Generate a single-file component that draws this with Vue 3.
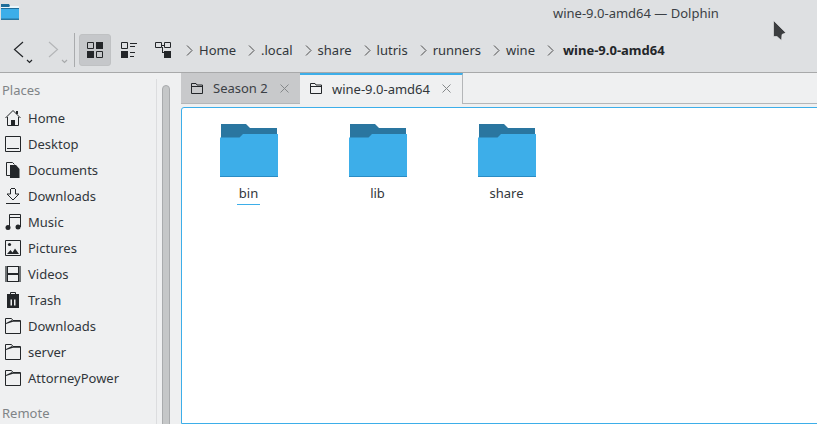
<script setup>
const crumbs = ['Home', '.local', 'share', 'lutris', 'runners', 'wine']
const places = [
  { name: 'Home', icon: 'home' },
  { name: 'Desktop', icon: 'desktop' },
  { name: 'Documents', icon: 'documents' },
  { name: 'Downloads', icon: 'downloads' },
  { name: 'Music', icon: 'music' },
  { name: 'Pictures', icon: 'pictures' },
  { name: 'Videos', icon: 'videos' },
  { name: 'Trash', icon: 'trash' },
  { name: 'Downloads', icon: 'folder' },
  { name: 'server', icon: 'folder' },
  { name: 'AttorneyPower', icon: 'folder' }
]
const files = [
  { name: 'bin', current: true },
  { name: 'lib', current: false },
  { name: 'share', current: false }
]
const tabs = [
  { name: 'Season 2', active: false },
  { name: 'wine-9.0-amd64', active: true }
]
</script>

<template>
  <div class="window">
    <header class="titlebar">
      <svg class="app-icon" width="20" height="20" viewBox="0 0 20 20">
        <path d="M1 2h8l1 2h9v14H1z" fill="#1d6d99" />
        <path d="M1 5h8l1-1h9v2H1z" fill="#eaf6fc" />
        <path d="M1 7h18v10H1z" fill="#3daee9" />
        <path d="M1 16.500h18V18H1z" fill="#2a76a0" />
      </svg>
      <span class="title">wine-9.0-amd64 — Dolphin</span>
      <svg class="cursor" width="14" height="22" viewBox="0 0 14 22">
        <path d="M.5.500L12.800 12.800 9 14.500 8.500 20.500 4 16.500H.5z" fill="#3c3e40" stroke="#eff0f1" stroke-width=".6" />
      </svg>
    </header>

    <div class="toolbar">
      <div class="nav nav-back">
        <svg width="12" height="18" viewBox="0 0 12 18"><path d="M10 1L1.500 8.500 10 16" fill="none" stroke="#232629" stroke-width="1.200" /></svg>
        <svg class="chev" width="7" height="5" viewBox="0 0 7 5"><path d="M1 1l2.500 2.500L6 1" fill="none" stroke="#232629" stroke-width="1.200" /></svg>
      </div>
      <div class="nav nav-forward">
        <svg width="12" height="18" viewBox="0 0 12 18"><path d="M1 1l8.500 7.500L1 16" fill="none" stroke="#b4b6b8" stroke-width="1.200" /></svg>
        <svg class="chev" width="7" height="5" viewBox="0 0 7 5"><path d="M1 1l2.500 2.500L6 1" fill="none" stroke="#a8aaac" stroke-width="1.200" /></svg>
      </div>
      <span class="sep"></span>
      <button class="tool tool-on">
        <svg width="16" height="16" viewBox="0 0 16 16" fill="#232629">
          <path d="M.5.500h6v6h-6z" fill="none" stroke="#232629" />
          <rect x="9" width="7" height="7" />
          <rect y="9" width="7" height="7" />
          <path d="M9.500 9.500h6v6h-6z" fill="none" stroke="#232629" />
        </svg>
      </button>
      <button class="tool">
        <svg width="16" height="16" viewBox="0 0 16 16" fill="#232629">
          <path d="M.5.500h6v6h-6z" fill="none" stroke="#232629" />
          <path d="M9 1h7v1H9zM9 4h5v1H9z" />
          <rect y="9" width="7" height="7" />
          <path d="M9 10h5v1H9zM9 14h4v1H9z" />
        </svg>
      </button>
      <button class="tool">
        <svg width="16" height="16" viewBox="0 0 16 16" fill="#232629">
          <path d="M.5.500h6v5h-6zM9.500.500h6v5h-6z" fill="none" stroke="#232629" />
          <path d="M6 3h4v1H6zM7 5h1v6H7zM7 10h3v1H7z" />
          <rect x="9" y="9" width="7" height="7" />
        </svg>
      </button>
      <nav class="crumbs">
        <template v-for="c in crumbs" :key="c">
          <svg class="arrow" width="7" height="11" viewBox="0 0 7 11"><path d="M1 .5l5 5-5 5" fill="none" stroke="#4d4d4d" stroke-width="1" /></svg>
          <span class="crumb">{{ c }}</span>
        </template>
        <svg class="arrow" width="7" height="11" viewBox="0 0 7 11"><path d="M1 .5l5 5-5 5" fill="none" stroke="#4d4d4d" stroke-width="1" /></svg>
        <strong class="crumb">wine-9.0-amd64</strong>
      </nav>
    </div>

    <div class="body">
      <aside class="sidebar">
        <div class="places">
          <div class="section">Places</div>
          <div v-for="p in places" :key="p.name + p.icon" class="place">
            <svg width="16" height="16" viewBox="0 0 16 16" fill="#232629" class="picon">
              <g v-if="p.icon === 'home'">
                <path d="M.5 8L8 .5 15.500 8" fill="none" stroke="#232629" />
                <path d="M2.500 7v8.500h11V7" fill="none" stroke="#232629" />
                <rect x="6" y="10" width="4" height="5.500" />
                <rect x="11" y="1" width="2" height="3" />
              </g>
              <g v-else-if="p.icon === 'desktop'">
                <path d="M.5.500h15v15H.5z" fill="none" stroke="#232629" />
                <rect x="2" y="12" width="12" height="1" />
              </g>
              <g v-else-if="p.icon === 'documents'">
                <path d="M5.500 13.500h-4V.5h6l2 2" fill="none" stroke="#232629" />
                <path d="M5 3h6l3.500 4v9H5z" />
              </g>
              <g v-else-if="p.icon === 'downloads'">
                <path d="M6 .5h4M5.500 1v5M10.500 1v5M5.500 6H2l6 6 6-6h-3.500" fill="none" stroke="#232629" />
                <rect x="1" y="15" width="14" height="1" />
              </g>
              <g v-else-if="p.icon === 'music'">
                <path d="M4.500 13V.5h11V13M4.500 3.500h11" fill="none" stroke="#232629" />
                <circle cx="3" cy="13.500" r="2.500" />
                <circle cx="13" cy="13" r="2.500" />
              </g>
              <g v-else-if="p.icon === 'pictures'">
                <path d="M.5.500h15v15H.5z" fill="none" stroke="#232629" />
                <circle cx="4.500" cy="4.500" r="1.600" />
                <path d="M2 14l3.500-4 2 2.500L10 8.500 14 14z" />
              </g>
              <g v-else-if="p.icon === 'videos'">
                <rect width="16" height="16" fill="#6d7173" />
                <rect x="3" y="1" width="10" height="14" fill="#eff0f1" />
                <rect x="2" width="1" height="16" />
                <rect x="13" width="1" height="16" />
                <rect x="2" width="12" height="1" />
                <rect x="2" y="7" width="12" height="2" />
                <rect x="2" y="15" width="12" height="1" />
              </g>
              <g v-else-if="p.icon === 'trash'">
                <path d="M5.500 2.500v-2h5v2" fill="none" stroke="#232629" />
                <rect x="2" y="2" width="12" height="2" />
                <path d="M2 4h12v12H2zM5.500 7.500v6h1.500v-6zM9 7.500v6h1.500v-6z" fill-rule="evenodd" />
              </g>
              <g v-else>
                <path d="M.5 15.500V.5h6l1.500 2h7.500v13z" fill="none" stroke="#232629" />
                <path d="M1 5l6-3 1 1h7v.8H8L1 6z" />
              </g>
            </svg>
            <span>{{ p.name }}</span>
          </div>
          <div class="section section-remote">Remote</div>
        </div>
        <div class="scrolltrack"><div class="thumb"></div></div>
      </aside>

      <main class="content">
        <div class="tabs">
          <div v-for="t in tabs" :key="t.name" class="tab" :class="t.active ? 'tab-on' : 'tab-off'">
            <svg class="tab-folder" width="12" height="11" viewBox="0 0 12 11" fill="#232629">
              <path d="M.5 10.500V.5h4.500l1 1.500h5.500v8.500z" fill="none" stroke="#232629" />
              <rect x="1" y="3" width="10" height="1" />
            </svg>
            <span>{{ t.name }}</span>
            <svg class="close" width="9" height="9" viewBox="0 0 9 9"><path d="M.5.500l8 8M8.500.500l-8 8" fill="none" stroke="#85888a" stroke-width="1" /></svg>
          </div>
          <div class="tab-rest"></div>
        </div>
        <div class="view">
          <div v-for="f in files" :key="f.name" class="file">
            <svg width="58" height="53" viewBox="0 0 58 53">
              <path d="M1 0h25l4 4h27v14H1z" fill="#2a76a0" />
              <path d="M0 13.500h19.500l3.500-3.500h35v42H0z" fill="#3daee9" />
              <rect y="52" width="58" height="1" fill="#2a8cc4" />
            </svg>
            <span class="fname" :class="{ current: f.current }">{{ f.name }}</span>
          </div>
        </div>
      </main>
    </div>
  </div>
</template>

<style>
html, body { margin: 0; overflow: hidden; background: #eff0f1; }
</style>

<style scoped>
.window {
  width: 817px;
  height: 424px;
  display: flex;
  flex-direction: column;
  overflow: hidden;
  font-family: "Noto Sans", sans-serif;
  font-size: 13px;
  color: #31363b;
  background: #eff0f1;
}
.titlebar {
  position: relative;
  height: 28px;
  flex: none;
  background: #dee0e2;
}
.app-icon { position: absolute; left: 0; top: 2px; }
.title {
  position: absolute;
  left: 553px;
  top: 4px;
  line-height: 18px;
  color: #3b4045;
}
.cursor { position: absolute; left: 773px; top: 20px; z-index: 2; }
.toolbar {
  height: 44px;
  flex: none;
  display: flex;
  align-items: center;
  background: #dee0e2;
  border-bottom: 1px solid #a8a9aa;
}
.nav {
  position: relative;
  height: 30px;
  flex: none;
  display: flex;
  align-items: center;
}
.nav-back { margin-left: 13px; width: 35px; }
.nav-forward { width: 26px; }
.chev { position: absolute; left: 13px; top: 24px; }
.sep { width: 1px; height: 34px; background: #a9abad; margin-right: 4px; flex: none; }
.tool {
  width: 32px;
  height: 32px;
  margin-right: 2px;
  padding: 0;
  flex: none;
  display: flex;
  align-items: center;
  justify-content: center;
  border: 1px solid transparent;
  border-radius: 3px;
  background: transparent;
}
.tool-on { background: #c5c7ca; border-color: #bfc1c3; }
.crumbs {
  display: flex;
  align-items: center;
  white-space: nowrap;
  color: #31363b;
}
.arrow { margin: 0 6px 0 5px; flex: none; }
.crumb { margin-right: 7px; }
strong.crumb { font-weight: 700; color: #232629; margin-left: 3px; }
.body { flex: 1; display: flex; min-height: 0; }
.sidebar {
  width: 174px;
  flex: none;
  display: flex;
  background: #eff0f1;
}
.places {
  width: 157px;
  flex: none;
  border-right: 1px solid #dcdddf;
  margin-top: 6px;
  padding-left: 2px;
  box-sizing: border-box;
}
.section {
  height: 26px;
  line-height: 22px;
  color: #7f8487;
}
.section-remote { margin-top: 11px; }
.place {
  height: 26px;
  display: flex;
  align-items: center;
  gap: 7px;
  padding-left: 3px;
  line-height: 26px;
}
.picon { flex: none; }
.scrolltrack { flex: 1; padding: 12px 2px 0 5px; }
.thumb {
  width: 8px;
  height: 360px;
  box-sizing: border-box;
  background: #c5c7c8;
  border: 1px solid #a9abad;
  border-radius: 4px 4px 0 0;
}
.content { flex: 1; min-width: 0; display: flex; flex-direction: column; margin-left: 7px; }
.tabs { height: 31px; flex: none; display: flex; }
.tab {
  display: flex;
  align-items: center;
  box-sizing: border-box;
  height: 31px;
  padding: 0 11px 0 10px;
  white-space: nowrap;
}
.tab-folder { margin-right: 10px; flex: none; }
.close { margin-left: auto; flex: none; }
.tab-off { width: 119px; background: #c8c9cb; border-bottom: 1px solid #b4b6b8; color: #3b4045; }
.tab-on {
  width: 163px;
  background: #eff0f1;
  border-top: 2px solid #3daee9;
  border-right: 1px solid #b4b6b8;
  padding-bottom: 2px;
}
.tab-rest { flex: 1; border-bottom: 1px solid #b4b6b8; }
.view {
  flex: 1;
  margin-top: 3px;
  margin-right: -3px;
  background: #fff;
  border: 1px solid #3daee9;
  border-radius: 3px 0 0 0;
  display: flex;
  align-items: flex-start;
  padding: 16px 0 0 2px;
  box-sizing: border-box;
}
.file {
  width: 129px;
  flex: none;
  display: flex;
  flex-direction: column;
  align-items: center;
}
.fname {
  margin-top: 6px;
  padding: 0 2px 1px;
  line-height: 20px;
  border-bottom: 1px solid transparent;
}
.fname.current { border-bottom-color: #3daee9; }
</style>
